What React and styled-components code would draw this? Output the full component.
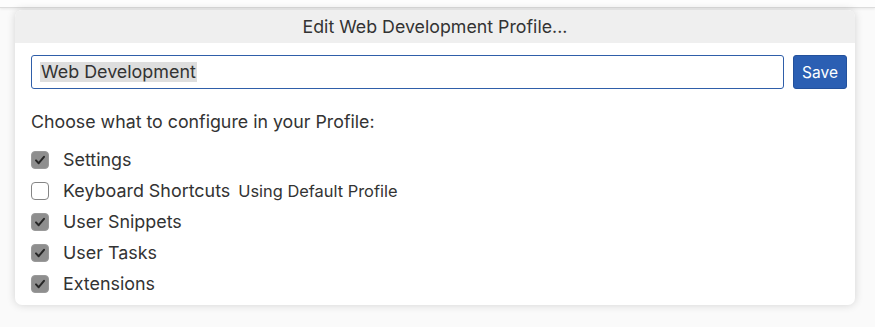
import styled, { createGlobalStyle } from 'styled-components';

const GlobalStyle = createGlobalStyle`
  body {
    margin: 0;
    background: #fafafa;
    font-family: Inter, "Open Sans", sans-serif;
  }
`;

const options = [
  { label: 'Settings', checked: true },
  { label: 'Keyboard Shortcuts', checked: false, note: 'Using Default Profile' },
  { label: 'User Snippets', checked: true },
  { label: 'User Tasks', checked: true },
  { label: 'Extensions', checked: true },
];

export default function App() {
  return (
    <Page>
      <GlobalStyle />
      <TopBar />
      <Dialog>
        <Title>Edit Web Development Profile...</Title>
        <Body>
          <InputRow>
            <NameInput>
              <Selected>Web Development</Selected>
            </NameInput>
            <SaveButton>Save</SaveButton>
          </InputRow>
          <Heading>Choose what to configure in your Profile:</Heading>
          <List>
            {options.map((o) => (
              <Row key={o.label}>
                <Box checked={o.checked}>
                  {o.checked && (
                    <svg width='12' height='12' viewBox='0 0 12 12'>
                      <path
                        d='M2 6.4 L4.7 9.2 L10 2.8'
                        fill='none'
                        stroke='#262626'
                        strokeWidth='2'
                        strokeLinecap='round'
                        strokeLinejoin='round'
                      />
                    </svg>
                  )}
                </Box>
                <Label>{o.label}</Label>
                {o.note && <Note>{o.note}</Note>}
              </Row>
            ))}
          </List>
        </Body>
      </Dialog>
    </Page>
  );
}

const Page = styled.div`
  width: 875px;
  height: 327px;
  position: relative;
  overflow: hidden;
  background: #fafafa;
`;

const TopBar = styled.div`
  height: 7px;
  background: #fdfdfd;
  border-bottom: 1px solid #dcdcdc;
  box-shadow: 0 1px 3px rgba(0, 0, 0, 0.08);
`;

const Dialog = styled.div`
  margin: 2px 0 0 15px;
  width: 840px;
  height: 295px;
  background: #fff;
  border-radius: 7px;
  box-shadow: 0 0 8px rgba(0, 0, 0, 0.16);
  overflow: hidden;
  display: flex;
  flex-direction: column;
`;

const Title = styled.div`
  height: 33px;
  background: #efefef;
  display: flex;
  align-items: center;
  justify-content: center;
  font-size: 17.8px;
  color: #333;
`;

const Body = styled.div`
  padding: 12px 8px 0 16px;
`;

const InputRow = styled.div`
  display: flex;
  gap: 9px;
`;

const NameInput = styled.div`
  flex: 1;
  height: 34px;
  box-sizing: border-box;
  border: 1px solid #2f5ea9;
  border-radius: 3px;
  display: flex;
  align-items: center;
  padding-left: 8px;
  font-size: 17.9px;
  color: #333;
`;

const Selected = styled.span`
  background: #dedede;
  padding: 0 1px;
  line-height: 20px;
`;

const SaveButton = styled.div`
  width: 54px;
  height: 34px;
  box-sizing: border-box;
  background: #2b5fb3;
  border: 1px solid #23519c;
  border-radius: 3px;
  color: #fff;
  font-size: 15.5px;
  display: flex;
  align-items: center;
  justify-content: center;
`;

const Heading = styled.div`
  margin-top: 22px;
  font-size: 17.8px;
  color: #333;
  line-height: 22px;
`;

const List = styled.div`
  margin-top: 11px;
  display: flex;
  flex-direction: column;
`;

const Row = styled.div`
  height: 31px;
  display: flex;
  align-items: center;
`;

const Box = styled.div`
  width: 18px;
  height: 18px;
  box-sizing: border-box;
  border-radius: 4px;
  border: 1px solid ${(p) => (p.checked ? '#9a9a9a' : '#858585')};
  background: ${(p) => (p.checked ? '#8e8e8e' : '#fff')};
  display: flex;
  align-items: center;
  justify-content: center;
  margin-right: 14px;
`;

const Label = styled.span`
  font-size: 17.9px;
  color: #333;
`;

const Note = styled.span`
  margin-left: 8px;
  font-size: 16.4px;
  color: #333;
`;
